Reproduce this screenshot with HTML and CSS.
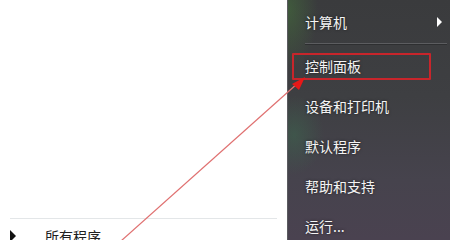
FILE: index.html
```html
<!doctype html>
<html lang="zh-CN">
<head>
	<meta charset="utf-8">
	<title>开始菜单</title>
	<link rel="stylesheet" href="styles.css">
</head>
<body>
	<main class="menu">
		<section class="left">
			<div class="rule"></div>
			<div class="all"><span class="tri"></span><span>所有程序</span></div>
		</section>
		<nav class="right">
			<div class="item"><span>计算机</span><span class="more"></span></div>
			<div class="sep"></div>
			<div class="item marked"><span class="box">控制面板</span></div>
			<div class="item"><span>设备和打印机</span></div>
			<div class="item"><span>默认程序</span></div>
			<div class="item"><span>帮助和支持</span></div>
			<div class="item"><span>运行...</span></div>
		</nav>
	</main>
	<svg class="pointer" width="450" height="240" viewBox="0 0 450 240">
		<line x1="121" y1="241" x2="298" y2="83" stroke="#e07070" stroke-width="1.2"></line>
		<polygon points="305,77 292,84 299,90" fill="#e81818"></polygon>
	</svg>
</body>
</html>
```

FILE: styles.css
```css
* {
	box-sizing: border-box;
}
html, body {
	margin: 0;
	padding: 0;
	width: 450px;
	height: 240px;
	overflow: hidden;
	font-family: "Noto Sans CJK SC", "Noto Sans", sans-serif;
	font-size: 14px;
}
body {
	position: relative;
	background-color: #FFFFFF;
}
.menu {
	display: flex;
	flex-direction: row;
	height: 240px;
}
.left {
	width: 287px;
	padding: 218px 10px 0 10px;
	background-color: #FFFFFF;
}
.rule {
	height: 1px;
	margin-right: 0;
	background-color: #e3e6e8;
}
.all {
	display: flex;
	align-items: center;
	height: 26px;
	margin-top: 4px;
	color: #202020;
}
.tri {
	width: 0;
	height: 0;
	margin-right: 29px;
	border-top: 6px solid transparent;
	border-bottom: 6px solid transparent;
	border-left: 6px solid #111111;
}
.right {
	flex: 1;
	display: flex;
	flex-direction: column;
	padding: 2px 3px 0 4px;
	border-left: 1px solid #5b5b60;
	background:
		radial-gradient(ellipse 30px 60px at 0 10px, rgba(70, 120, 60, .5), transparent),
		radial-gradient(ellipse 30px 40px at 6px 135px, rgba(60, 110, 80, .45), transparent),
		linear-gradient(180deg, #3a3b3d 0%, #3e3f42 40%, #46434d 75%, #4a4250 100%);
	color: #f4f4f4;
}
.item {
	display: flex;
	align-items: center;
	height: 40px;
	padding-left: 13px;
	text-shadow: 0 0 3px rgba(0, 0, 0, .6);
	flex-shrink: 0;
}
.more {
	width: 0;
	height: 0;
	margin-left: auto;
	margin-right: 5px;
	border-top: 5px solid transparent;
	border-bottom: 5px solid transparent;
	border-left: 5px solid #FFFFFF;
}
.sep {
	height: 2px;
	margin: 1px 0 1px 13px;
	border-top: 1px solid #5c5d60;
	border-bottom: 1px solid #2e2f31;
	flex-shrink: 0;
}
.item.marked {
	padding-left: 0;
}
.box {
	display: flex;
	align-items: center;
	width: 139px;
	height: 27px;
	padding-left: 11px;
	border: 2px solid #c8252b;
	border-radius: 1px;
}
.pointer {
	position: absolute;
	left: 0;
	top: 0;
	pointer-events: none;
}
```
